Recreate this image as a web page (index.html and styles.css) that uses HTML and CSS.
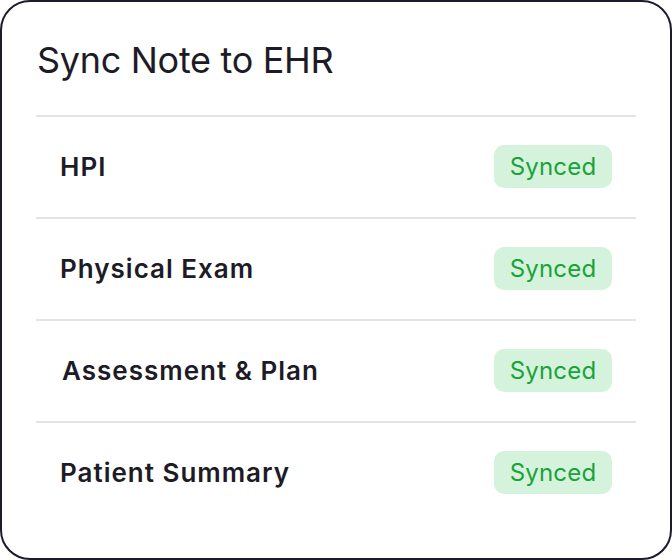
FILE: index.html
```html
<!DOCTYPE html>
<html>
<head>
<meta charset="utf-8">
<link rel="stylesheet" href="styles.css">
</head>
<body>
<div class="card">
  <h1 class="title">Sync Note to EHR</h1>
  <ul class="list">
    <li class="row"><span class="label">HPI</span><span class="badge">Synced</span></li>
    <li class="row"><span class="label">Physical Exam</span><span class="badge">Synced</span></li>
    <li class="row"><span class="label label-shift">Assessment &amp; Plan</span><span class="badge">Synced</span></li>
    <li class="row"><span class="label">Patient Summary</span><span class="badge">Synced</span></li>
  </ul>
</div>
</body>
</html>
```
FILE: styles.css
```css
html, body {
  margin: 0;
  padding: 0;
  background: #ffffff;
}
body {
  font-family: Inter, "Noto Sans", sans-serif;
  color: #1c1b26;
}
.card {
  box-sizing: border-box;
  width: 672px;
  height: 560px;
  border: 2px solid #1c1b2b;
  border-radius: 30px;
  padding: 0 34px;
  background: #ffffff;
}
.title {
  margin: 0;
  height: 113px;
  display: flex;
  align-items: center;
  padding-left: 1px;
  padding-top: 2px;
  box-sizing: border-box;
  font-size: 36px;
  font-weight: 400;
  letter-spacing: -0.3px;
  color: #1c1b26;
}
.list {
  list-style: none;
  margin: 0;
  padding: 0;
}
.row {
  box-sizing: content-box;
  height: 98px;
  padding: 0 24px 2px;
  border-top: 2px solid #e3e3e3;
  display: flex;
  align-items: center;
  justify-content: space-between;
}
.label {
  font-size: 26px;
  font-weight: 600;
  letter-spacing: 1px;
  color: #1c1b26;
}
.label-shift {
  padding-left: 2px;
}
.badge {
  box-sizing: border-box;
  width: 118px;
  height: 43px;
  display: flex;
  align-items: center;
  justify-content: center;
  background: #d5f2dc;
  border-radius: 10px;
  color: #1aa33a;
  font-size: 24px;
  font-weight: 400;
  letter-spacing: 0.2px;
}
```
